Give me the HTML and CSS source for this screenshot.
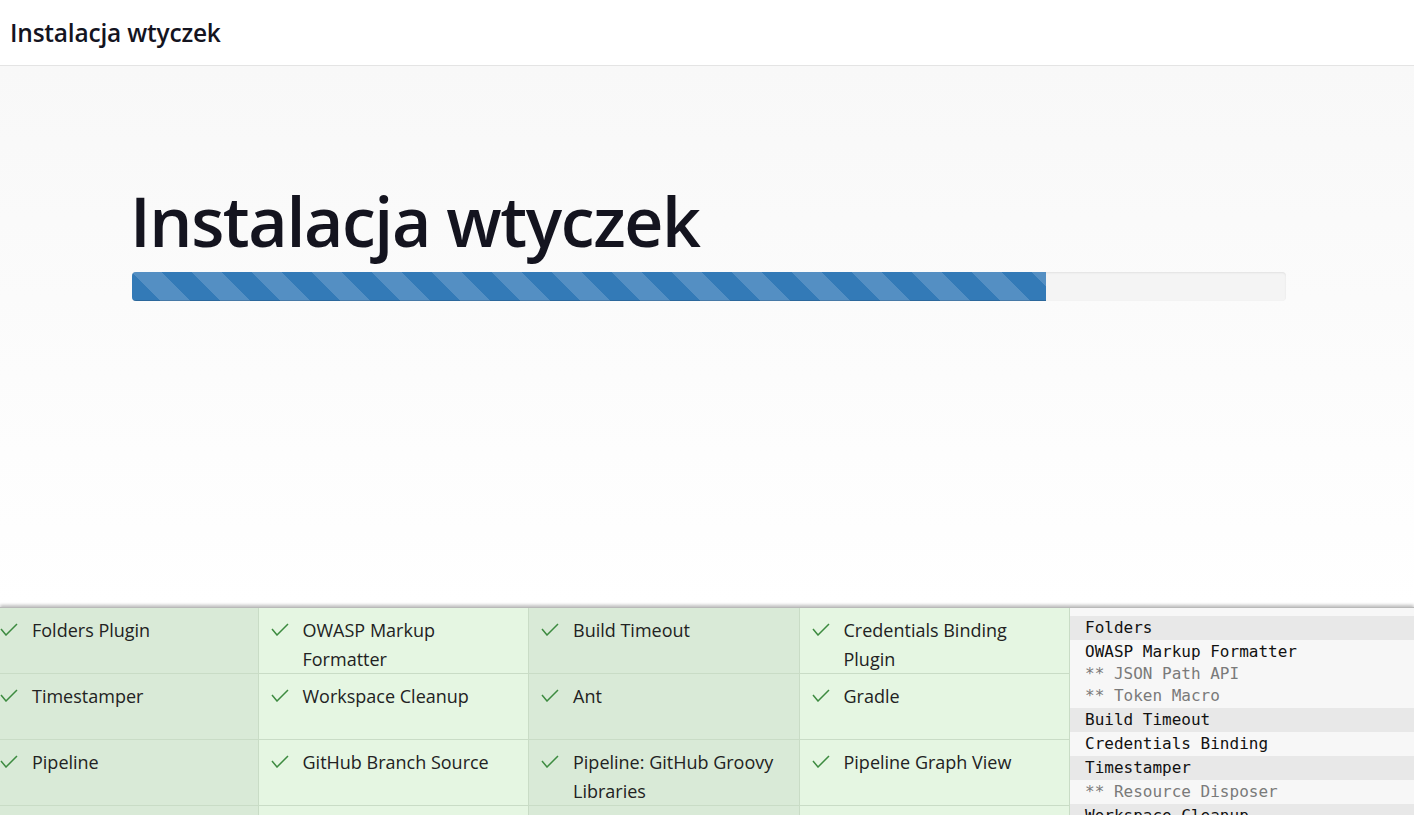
FILE: index.html
```html
<!DOCTYPE html>
<html lang="pl">
<head>
<meta charset="utf-8">
<title>Instalacja wtyczek</title>
<link rel="stylesheet" href="styles.css">
</head>
<body>
<div class="page">
  <header class="topbar">
    <h2 class="topbar-title">Instalacja wtyczek</h2>
  </header>
  <section class="hero">
    <div class="hero-inner">
      <h1 class="hero-title">Instalacja wtyczek</h1>
      <div class="progress">
        <div class="progress-bar" style="width: 79.2%"></div>
      </div>
    </div>
  </section>
  <section class="install">
    <div class="plugin-grid">
      <div class="plugin dark"><span class="check"><svg viewBox="0 0 18 13" width="18" height="13"><polyline points="1,6 6,12 17,1" /></svg></span><span class="name">Folders Plugin</span></div>
      <div class="plugin light"><span class="check"><svg viewBox="0 0 18 13" width="18" height="13"><polyline points="1,6 6,12 17,1" /></svg></span><span class="name">OWASP Markup Formatter</span></div>
      <div class="plugin dark"><span class="check"><svg viewBox="0 0 18 13" width="18" height="13"><polyline points="1,6 6,12 17,1" /></svg></span><span class="name">Build Timeout</span></div>
      <div class="plugin light"><span class="check"><svg viewBox="0 0 18 13" width="18" height="13"><polyline points="1,6 6,12 17,1" /></svg></span><span class="name">Credentials Binding Plugin</span></div>

      <div class="plugin dark"><span class="check"><svg viewBox="0 0 18 13" width="18" height="13"><polyline points="1,6 6,12 17,1" /></svg></span><span class="name">Timestamper</span></div>
      <div class="plugin light"><span class="check"><svg viewBox="0 0 18 13" width="18" height="13"><polyline points="1,6 6,12 17,1" /></svg></span><span class="name">Workspace Cleanup</span></div>
      <div class="plugin dark"><span class="check"><svg viewBox="0 0 18 13" width="18" height="13"><polyline points="1,6 6,12 17,1" /></svg></span><span class="name">Ant</span></div>
      <div class="plugin light"><span class="check"><svg viewBox="0 0 18 13" width="18" height="13"><polyline points="1,6 6,12 17,1" /></svg></span><span class="name">Gradle</span></div>

      <div class="plugin dark"><span class="check"><svg viewBox="0 0 18 13" width="18" height="13"><polyline points="1,6 6,12 17,1" /></svg></span><span class="name">Pipeline</span></div>
      <div class="plugin light"><span class="check"><svg viewBox="0 0 18 13" width="18" height="13"><polyline points="1,6 6,12 17,1" /></svg></span><span class="name">GitHub Branch Source</span></div>
      <div class="plugin dark"><span class="check"><svg viewBox="0 0 18 13" width="18" height="13"><polyline points="1,6 6,12 17,1" /></svg></span><span class="name">Pipeline: GitHub Groovy Libraries</span></div>
      <div class="plugin light"><span class="check"><svg viewBox="0 0 18 13" width="18" height="13"><polyline points="1,6 6,12 17,1" /></svg></span><span class="name">Pipeline Graph View</span></div>

      <div class="plugin dark"></div>
      <div class="plugin light"></div>
      <div class="plugin dark"></div>
      <div class="plugin light"></div>
    </div>
    <div class="install-log">
      <div class="log-group">
        <div class="log-line">Folders</div>
      </div>
      <div class="log-group">
        <div class="log-line">OWASP Markup Formatter</div>
        <div class="log-line dep">** JSON Path API</div>
        <div class="log-line dep">** Token Macro</div>
      </div>
      <div class="log-group">
        <div class="log-line">Build Timeout</div>
      </div>
      <div class="log-group">
        <div class="log-line">Credentials Binding</div>
      </div>
      <div class="log-group">
        <div class="log-line">Timestamper</div>
      </div>
      <div class="log-group">
        <div class="log-line dep">** Resource Disposer</div>
      </div>
      <div class="log-group">
        <div class="log-line">Workspace Cleanup</div>
      </div>
    </div>
  </section>
</div>
</body>
</html>
```
FILE: styles.css
```css
html, body {
  margin: 0;
  padding: 0;
  height: 100%;
  overflow: hidden;
  background: #ffffff;
}

.page {
  display: flex;
  flex-direction: column;
  height: 815px;
  font-family: "Open Sans", "Noto Sans", sans-serif;
  color: #14141f;
}

.topbar {
  height: 65px;
  flex: none;
  display: flex;
  align-items: center;
  padding-left: 10px;
  border-bottom: 1px solid #e4e4e4;
  background: #ffffff;
}

.topbar-title {
  margin: 0;
  font-size: 24.5px;
  font-weight: 600;
  letter-spacing: -0.2px;
  color: #14141f;
}

.hero {
  height: 541px;
  flex: none;
  background: linear-gradient(#f8f8f8, #ffffff);
}

.hero-inner {
  margin-left: 132px;
  width: 1154px;
  padding-top: 112px;
}

.hero-title {
  margin: 0 0 8px -2px;
  font-size: 68px;
  line-height: 86px;
  font-weight: 600;
  letter-spacing: -1.4px;
  color: #14141f;
}

.progress {
  height: 29px;
  border-radius: 4px;
  background: #f4f4f4;
  box-shadow: inset 0 1px 2px rgba(0, 0, 0, 0.08);
  overflow: hidden;
}

.progress-bar {
  height: 100%;
  background-color: #337ab7;
  background-image: linear-gradient(45deg,
    rgba(255, 255, 255, 0.16) 25%, transparent 25%,
    transparent 50%, rgba(255, 255, 255, 0.16) 50%,
    rgba(255, 255, 255, 0.16) 75%, transparent 75%, transparent);
  background-size: 60px 60px;
  box-shadow: inset 0 -1px 0 rgba(0, 0, 0, 0.15);
}

.install {
  flex: none;
  display: flex;
  position: relative;
  box-shadow: 0 -2px 3px rgba(0, 0, 0, 0.25);
  border-top: 1px solid #b9b9b9;
  background: #ffffff;
}

.plugin-grid {
  margin-left: -12px;
  width: 1082px;
  flex: none;
  display: grid;
  grid-template-columns: repeat(4, 1fr);
  grid-auto-rows: 66px;
}

.plugin {
  display: flex;
  align-items: flex-start;
  padding: 8px 8px 0 12px;
  border-right: 1px solid #c9dcc6;
  border-bottom: 1px solid #c9dcc6;
  font-size: 18px;
  line-height: 29px;
  color: #222;
}

.plugin.dark {
  background: #d9ead7;
}

.plugin.light {
  background: #e5f6e2;
}

.check {
  flex: none;
  width: 32px;
  padding-top: 7px;
}

.check svg {
  display: block;
  fill: none;
  stroke: #3d8b40;
  stroke-width: 1.5;
}

.name {
  flex: 1;
  min-width: 0;
}

.install-log {
  flex: 1;
  background: #f7f7f7;
  padding-top: 8px;
  font-family: "DejaVu Sans Mono", "Liberation Mono", monospace;
  font-size: 16px;
  color: #111;
}

.log-group {
  padding: 1px 0 1px 15px;
}

.log-group:nth-child(odd) {
  background: #e8e8e8;
}

.log-line {
  line-height: 22px;
  white-space: nowrap;
}

.log-line.dep {
  color: #7a7a7a;
}
```
